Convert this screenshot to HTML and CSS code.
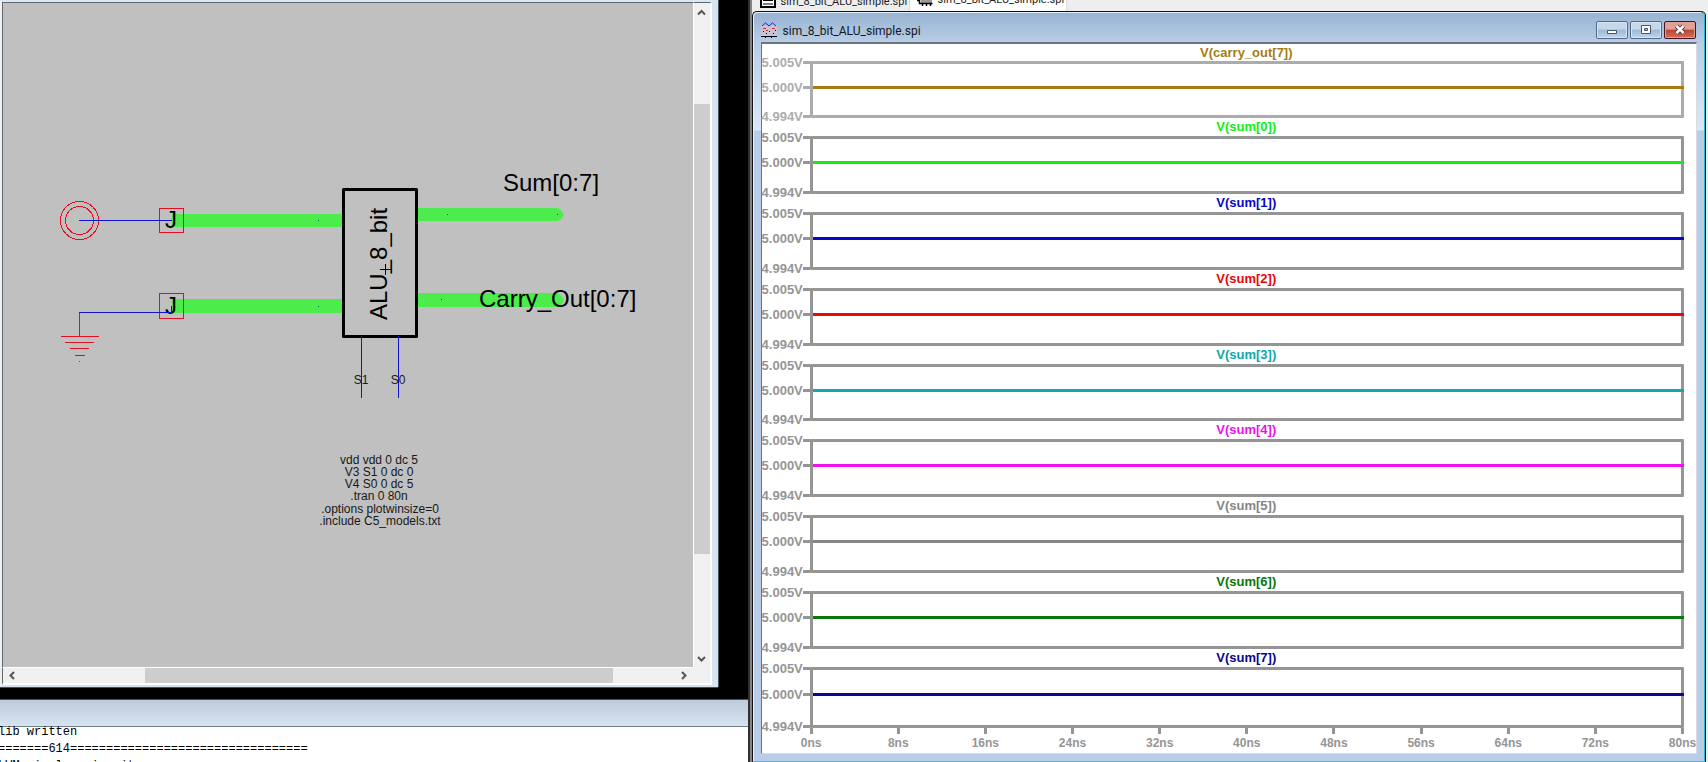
FILE: index.html
```
<!DOCTYPE html>
<html lang="en">
<head>
<meta charset="utf-8">
<title>sim_8_bit_ALU_simple.spi</title>
<link rel="stylesheet" href="styles.css">
</head>
<body>
<div class="desktop">
  <section class="workspace">
    <div class="editor">
      <div class="canvas">
        <svg class="schematic" width="690" height="664" viewBox="3 3 690 664" role="img" aria-label="ALU schematic">
          <defs>
            <pattern id="bus" width="2" height="2" patternUnits="userSpaceOnUse">
              <rect width="2" height="2" fill="#74d474"/>
              <rect width="1" height="1" fill="#4aea4a"/>
              <rect x="1" y="1" width="1" height="1" fill="#4aea4a"/>
            </pattern>
          </defs>
          <g fill="url(#bus)">
            <path d="M172 214H344V227H172z"/>
            <path d="M172 299H344V313H172z"/>
            <path d="M416 208H558L561 210L564 214.500L561 219L558 221H416z"/>
            <path d="M416 293H558L561 295L564 300L561 305L558 307H416z"/>
          </g>
          <rect x="343.500" y="189.500" width="73" height="147" fill="none" stroke="#000" stroke-width="3" stroke-linejoin="round"/>
          <g fill="none" stroke="#e01020" shape-rendering="crispEdges">
            <circle cx="79.500" cy="220.500" r="19"/>
            <circle cx="79.500" cy="220.500" r="14"/>
            <path d="M159.500 208.500h24v24h-24zM159.500 293.500h24v25h-24z"/>
            <path d="M79.500 313V336M61 336.500H99M65 342.500H94M70 348.500H89M75 355.500H85M79 361.500H80"/>
          </g>
          <g class="label"><text x="165" y="228">J</text><text x="165" y="314">J</text></g>
          <g fill="none" stroke="#1414d0" shape-rendering="crispEdges">
            <path d="M79 220.500H172M79 312.500H171.500V306M361.500 336V398M398.500 336V398"/>
          </g>
          <path d="M318 220h1v1h-1zM318 306h1v1h-1zM447 214h1v1h-1zM557 214h1v1h-1zM441 299h1v1h-1z" fill="#063"/>
          <path d="M380 269.500H391M385.500 264V275" stroke="#000" shape-rendering="crispEdges"/>
          <g class="label">
            <text transform="translate(387 320) rotate(-90)">ALU_8_bit</text>
            <text x="503" y="191">Sum[0:7]</text>
            <text x="479" y="307">Carry_Out[0:7]</text>
          </g>
          <g class="note">
            <text x="361" y="384">S1</text>
            <text x="398" y="384">S0</text>
            <text x="379" y="464">vdd vdd 0 dc 5</text>
            <text x="379" y="476">V3 S1 0 dc 0</text>
            <text x="379" y="488">V4 S0 0 dc 5</text>
            <text x="379" y="500">.tran 0 80n</text>
            <text x="380" y="513">.options plotwinsize=0</text>
            <text x="380" y="525">.include C5_models.txt</text>
          </g>
        </svg>
      </div>
      <div class="vbar">
        <button class="arrow" type="button" aria-label="Scroll up"><svg width="9" height="8"><path d="M1 6.500L4.500 3L8 6.500"/></svg></button>
        <div class="vtrack"><div class="vthumb"></div></div>
        <button class="arrow" type="button" aria-label="Scroll down"><svg width="9" height="8"><path d="M1 2L4.500 5.500L8 2"/></svg></button>
      </div>
      <div class="hbar">
        <button class="arrow" type="button" aria-label="Scroll left"><svg width="8" height="9"><path d="M6 1L2.500 4.500L6 8"/></svg></button>
        <div class="htrack"><div class="hthumb"></div></div>
        <button class="arrow" type="button" aria-label="Scroll right"><svg width="8" height="9"><path d="M2 1L5.500 4.500L2 8"/></svg></button>
      </div>
      <div class="corner"></div>
    </div>
    <div class="messages">
      <div class="messages-title"></div>
      <pre class="log">lib written
=======614=================================
LVM simple spice it</pre>
    </div>
  </section>

  <section class="viewer">
    <nav class="tabs">
      <a class="tab" href="#netlist">
        <svg width="16" height="16"><path d="M1 1H15V15H1z" fill="#fff" stroke="#000" stroke-width="2"/><path d="M3 5H13M3 8.500H13M3 12H13" stroke="#000"/></svg>
        <span>sim_8_bit_ALU_simple.spi</span>
      </a>
      <a class="tab tab-active" href="#waveform">
        <svg width="16" height="16"><path d="M4 2H15V13H4z" fill="#999"/><path d="M2.500 0V13.500H15.500M0 4.500H2M0 7.500H2M0 10.500H2M5.500 13V16M9.500 13V16M13.500 13V16" fill="none" stroke="#000" stroke-width="1.500"/></svg>
        <span>sim_8_bit_ALU_simple.spi</span>
      </a>
    </nav>
    <div class="window">
      <header class="titlebar">
        <svg class="wave-icon" width="16" height="16"><rect width="16" height="11" y="3" fill="#d3c3cf" opacity=".7"/><path d="M1 4L4.500 1L8 4L11.500 1L15 4" fill="none" stroke="#2020d0"/><path d="M2 6.500H5M11 6.500H14M5 8.500H7" stroke="#e03030"/><path d="M2 9.500H3M5 11.500H6M8 9.500H9M12 11.500H13M14 8.500H15M0 14.500H16M4.500 14V16M10.500 14V16" stroke="#000"/></svg>
        <h1 class="title">sim_8_bit_ALU_simple.spi</h1>
        <div class="controls">
          <button class="control" type="button" aria-label="Minimize"><svg width="12" height="12"><path d="M1.500 6.500h9v3h-9z" fill="#fff" stroke="#47566b"/></svg></button>
          <button class="control" type="button" aria-label="Maximize"><svg width="12" height="12"><path d="M1.500 1.500h9v8h-9z" fill="#fff" stroke="#47566b"/><path d="M4.500 4.500h3v2h-3z" fill="#a9c0dc" stroke="#47566b"/></svg></button>
          <button class="control control-close" type="button" aria-label="Close"><svg width="12" height="12"><path d="M2.500 2L9.500 9M9.500 2L2.500 9" stroke="#4f3038" stroke-width="4.500"/><path d="M2.500 2L9.500 9M9.500 2L2.500 9" stroke="#fff" stroke-width="2.500"/></svg></button>
        </div>
      </header>
      <main class="chart">
        <div class="panel panel-first"><h2 class="name trace-carry">V(carry_out[7])</h2><div class="plot"><div class="scale"><span>5.005V</span><span>5.000V</span><span>4.994V</span></div><div class="box"><div class="trace trace-carry"></div></div></div></div>
        <div class="panel"><h2 class="name trace-0">V(sum[0])</h2><div class="plot"><div class="scale"><span>5.005V</span><span>5.000V</span><span>4.994V</span></div><div class="box"><div class="trace trace-0"></div></div></div></div>
        <div class="panel"><h2 class="name trace-1">V(sum[1])</h2><div class="plot"><div class="scale"><span>5.005V</span><span>5.000V</span><span>4.994V</span></div><div class="box"><div class="trace trace-1"></div></div></div></div>
        <div class="panel"><h2 class="name trace-2">V(sum[2])</h2><div class="plot"><div class="scale"><span>5.005V</span><span>5.000V</span><span>4.994V</span></div><div class="box"><div class="trace trace-2"></div></div></div></div>
        <div class="panel"><h2 class="name trace-3">V(sum[3])</h2><div class="plot"><div class="scale"><span>5.005V</span><span>5.000V</span><span>4.994V</span></div><div class="box"><div class="trace trace-3"></div></div></div></div>
        <div class="panel"><h2 class="name trace-4">V(sum[4])</h2><div class="plot"><div class="scale"><span>5.005V</span><span>5.000V</span><span>4.994V</span></div><div class="box"><div class="trace trace-4"></div></div></div></div>
        <div class="panel"><h2 class="name trace-5">V(sum[5])</h2><div class="plot"><div class="scale"><span>5.005V</span><span>5.000V</span><span>4.994V</span></div><div class="box"><div class="trace trace-5"></div></div></div></div>
        <div class="panel"><h2 class="name trace-6">V(sum[6])</h2><div class="plot"><div class="scale"><span>5.005V</span><span>5.000V</span><span>4.994V</span></div><div class="box"><div class="trace trace-6"></div></div></div></div>
        <div class="panel panel-last"><h2 class="name trace-7">V(sum[7])</h2><div class="plot"><div class="scale"><span>5.005V</span><span>5.000V</span><span>4.994V</span></div><div class="box"><div class="trace trace-7"></div></div></div></div>
        <div class="times"><span>0ns</span><span>8ns</span><span>16ns</span><span>24ns</span><span>32ns</span><span>40ns</span><span>48ns</span><span>56ns</span><span>64ns</span><span>72ns</span><span>80ns</span></div>
      </main>
    </div>
  </section>
</div>
</body>
</html>
```
FILE: styles.css
```
* { box-sizing: border-box; }
body { margin: 0; background: #000; font-family: "Liberation Sans", Arial, sans-serif; }
.desktop { display: flex; height: 100vh; overflow: hidden; }

.workspace { flex: 78 1 0; min-width: 0; display: flex; flex-direction: column; gap: 12px; }
.editor {
  flex: 1; min-height: 0; margin-right: 30px;
  display: grid; grid-template-columns: 1fr 19px; grid-template-rows: 1fr 18px;
  background: #f0f0f0;
  border-style: solid; border-width: 2px 6px 2px 2px;
  border-color: #dbe7f3 #d6e4f2 #d6e0ea #f0f0f0;
  box-shadow: 0 1px #465058, 1px 0 #465058;
}
.canvas { min-width: 0; min-height: 0; overflow: hidden; background: #c0c0c0; border-top: 1px solid #5f6770; border-left: 1px solid #5f6770; }
.schematic { display: block; }
.label { font-size: 24px; }
.note { font-size: 12px; text-anchor: middle; fill: #181818; }

.vbar { display: flex; flex-direction: column; background: #f0f0f0; border: 1px solid #fff; border-width: 0 2px 0 1px; border-top: 1px solid #5f6770; }
.hbar { display: flex; background: #f0f0f0; border: solid #fff; border-width: 1px 0 2px; border-left: 1px solid #5f6770; }
.corner { background: #f0f0f0; border: solid #fff; border-width: 0 2px 2px 0; }
.arrow { flex: 0 0 17px; display: flex; align-items: center; justify-content: center; padding: 0; border: 0; background: none; }
.arrow path { fill: none; stroke: #555; stroke-width: 2px; }
.vtrack, .htrack { flex: 1; min-width: 0; display: flex; }
.vtrack { flex-direction: column; padding: 84px 0 96px; }
.htrack { padding: 0 63px 0 125px; }
.vthumb, .hthumb { flex: 1; background: #cdcdcd; }

.messages { flex: 0 0 63px; background: #fff; overflow: hidden; }
.messages-title { height: 28px; background: linear-gradient(#bccada, #d7e4f1); border-top: 1px solid #465058; border-bottom: 1px solid #73808f; }
.log { margin: -3px 0 0 -2px; font: 12px/17px "Liberation Mono", "Courier New", monospace; color: #000; }

.viewer { flex: 100 1 0; min-width: 0; display: flex; flex-direction: column; background: #eee; border-left: 2px solid #303030; box-shadow: inset 2px 0 #858585; }
.tabs { flex: 0 0 11px; display: flex; overflow: hidden; padding-left: 3px; }
.tab { flex: 0 0 157px; height: 11px; display: flex; align-items: flex-end; gap: 5px; padding: 0 0 3px 7px; font: 11px/12px Roboto, Arial, sans-serif; color: #222; text-decoration: none; border-right: 1px solid #ddd; }
.tab svg { flex: none; }
.tab-active { background: #fff; padding-bottom: 5px; }

.window {
  flex: 1; min-height: 0; display: flex; flex-direction: column;
  margin: 0 3px 0 2px; padding: 0 7px 7px 8px;
  border: 1px solid #111; border-bottom-color: #30c8d8; border-right: 1px solid #20bccc;
  border-radius: 5px 5px 0 0;
  background: linear-gradient(#97b2d1, #b8cde6 30px, #dce7f7 118px, #b9cde9 119px);
  box-shadow: 1px 0 #000, inset 1px 1px #e5f2fc;
}
.titlebar { flex: 0 0 30px; display: flex; align-items: center; gap: 6px; padding-top: 5px; }
.title { flex: 1; margin: 0; padding-top: 2px; font: 12px/16px Roboto, "Segoe UI", sans-serif; color: #101820; }
.controls { display: flex; gap: 2px; padding-right: 1px; }
.control {
  width: 32px; height: 18px; display: flex; align-items: center; justify-content: center; padding: 0;
  border: 1px solid #52698a; border-radius: 2px;
  background: linear-gradient(#c5d7eb 45%, #9db7d5 50%, #bfd5ed);
  box-shadow: inset 0 0 0 1px #d5e4f3;
}
.control-close { border-color: #431422; background: linear-gradient(#dfa193 45%, #bd4534 50%, #d2705a); box-shadow: inset 0 0 0 1px #dfa193; }

.chart { flex: 1; min-height: 0; background: #fff; border: 1px solid #d5dce4; border-top: 2px solid #6a7480; border-left: 1px solid #6a7480; display: flex; flex-direction: column; padding-right: 12px; }
.panel { flex: 76 1 0; min-height: 0; display: flex; flex-direction: column; color: #959595; }
.panel-first { flex-grow: 74; color: #acacac; }
.panel-last { flex-grow: 79; }
.name { flex: 0 0 18px; min-height: 0; margin: 0 0 0 47px; font-size: 13px; line-height: 18px; text-align: center; }
.panel-first .name { flex-basis: 17px; }
.plot { flex: 1; min-height: 0; display: flex; }
.scale { flex: 0 0 48px; display: grid; grid-template-rows: 3px 3px 1fr; row-gap: 22px; font-size: 13px; font-weight: bold; line-height: 3px; }
.scale span { display: flex; justify-content: space-between; height: 3px; white-space: nowrap; }
.scale span:last-child { align-self: end; }
.scale span::after { content: ""; width: 7px; height: 3px; background: currentColor; }
.box { flex: 1; border: 3px solid currentColor; border-radius: 1px; padding-top: 22px; }
.trace { height: 3px; margin-right: -3px; background: currentColor; }
.panel-last .scale { row-gap: 23px; }
.panel-last .box { padding-top: 23px; }

.trace-carry { color: #a67c12; }
.trace-0 { color: #10f010; }
.trace-1 { color: #0808c8; }
.trace-2 { color: #e80808; }
.trace-3 { color: #10a8a8; }
.trace-4 { color: #f010f0; }
.trace-5 { color: #858585; }
.trace-6 { color: #087808; }
.trace-7 { color: #080890; }

.times { flex: 0 0 23px; display: flex; justify-content: space-between; margin-left: 48px; font-size: 12px; line-height: 19px; font-weight: bold; color: #959595; }
.times span { width: 3px; display: flex; flex-direction: column; align-items: center; white-space: nowrap; }
.times span::before { content: ""; flex: none; width: 3px; height: 6px; background: currentColor; }
```
